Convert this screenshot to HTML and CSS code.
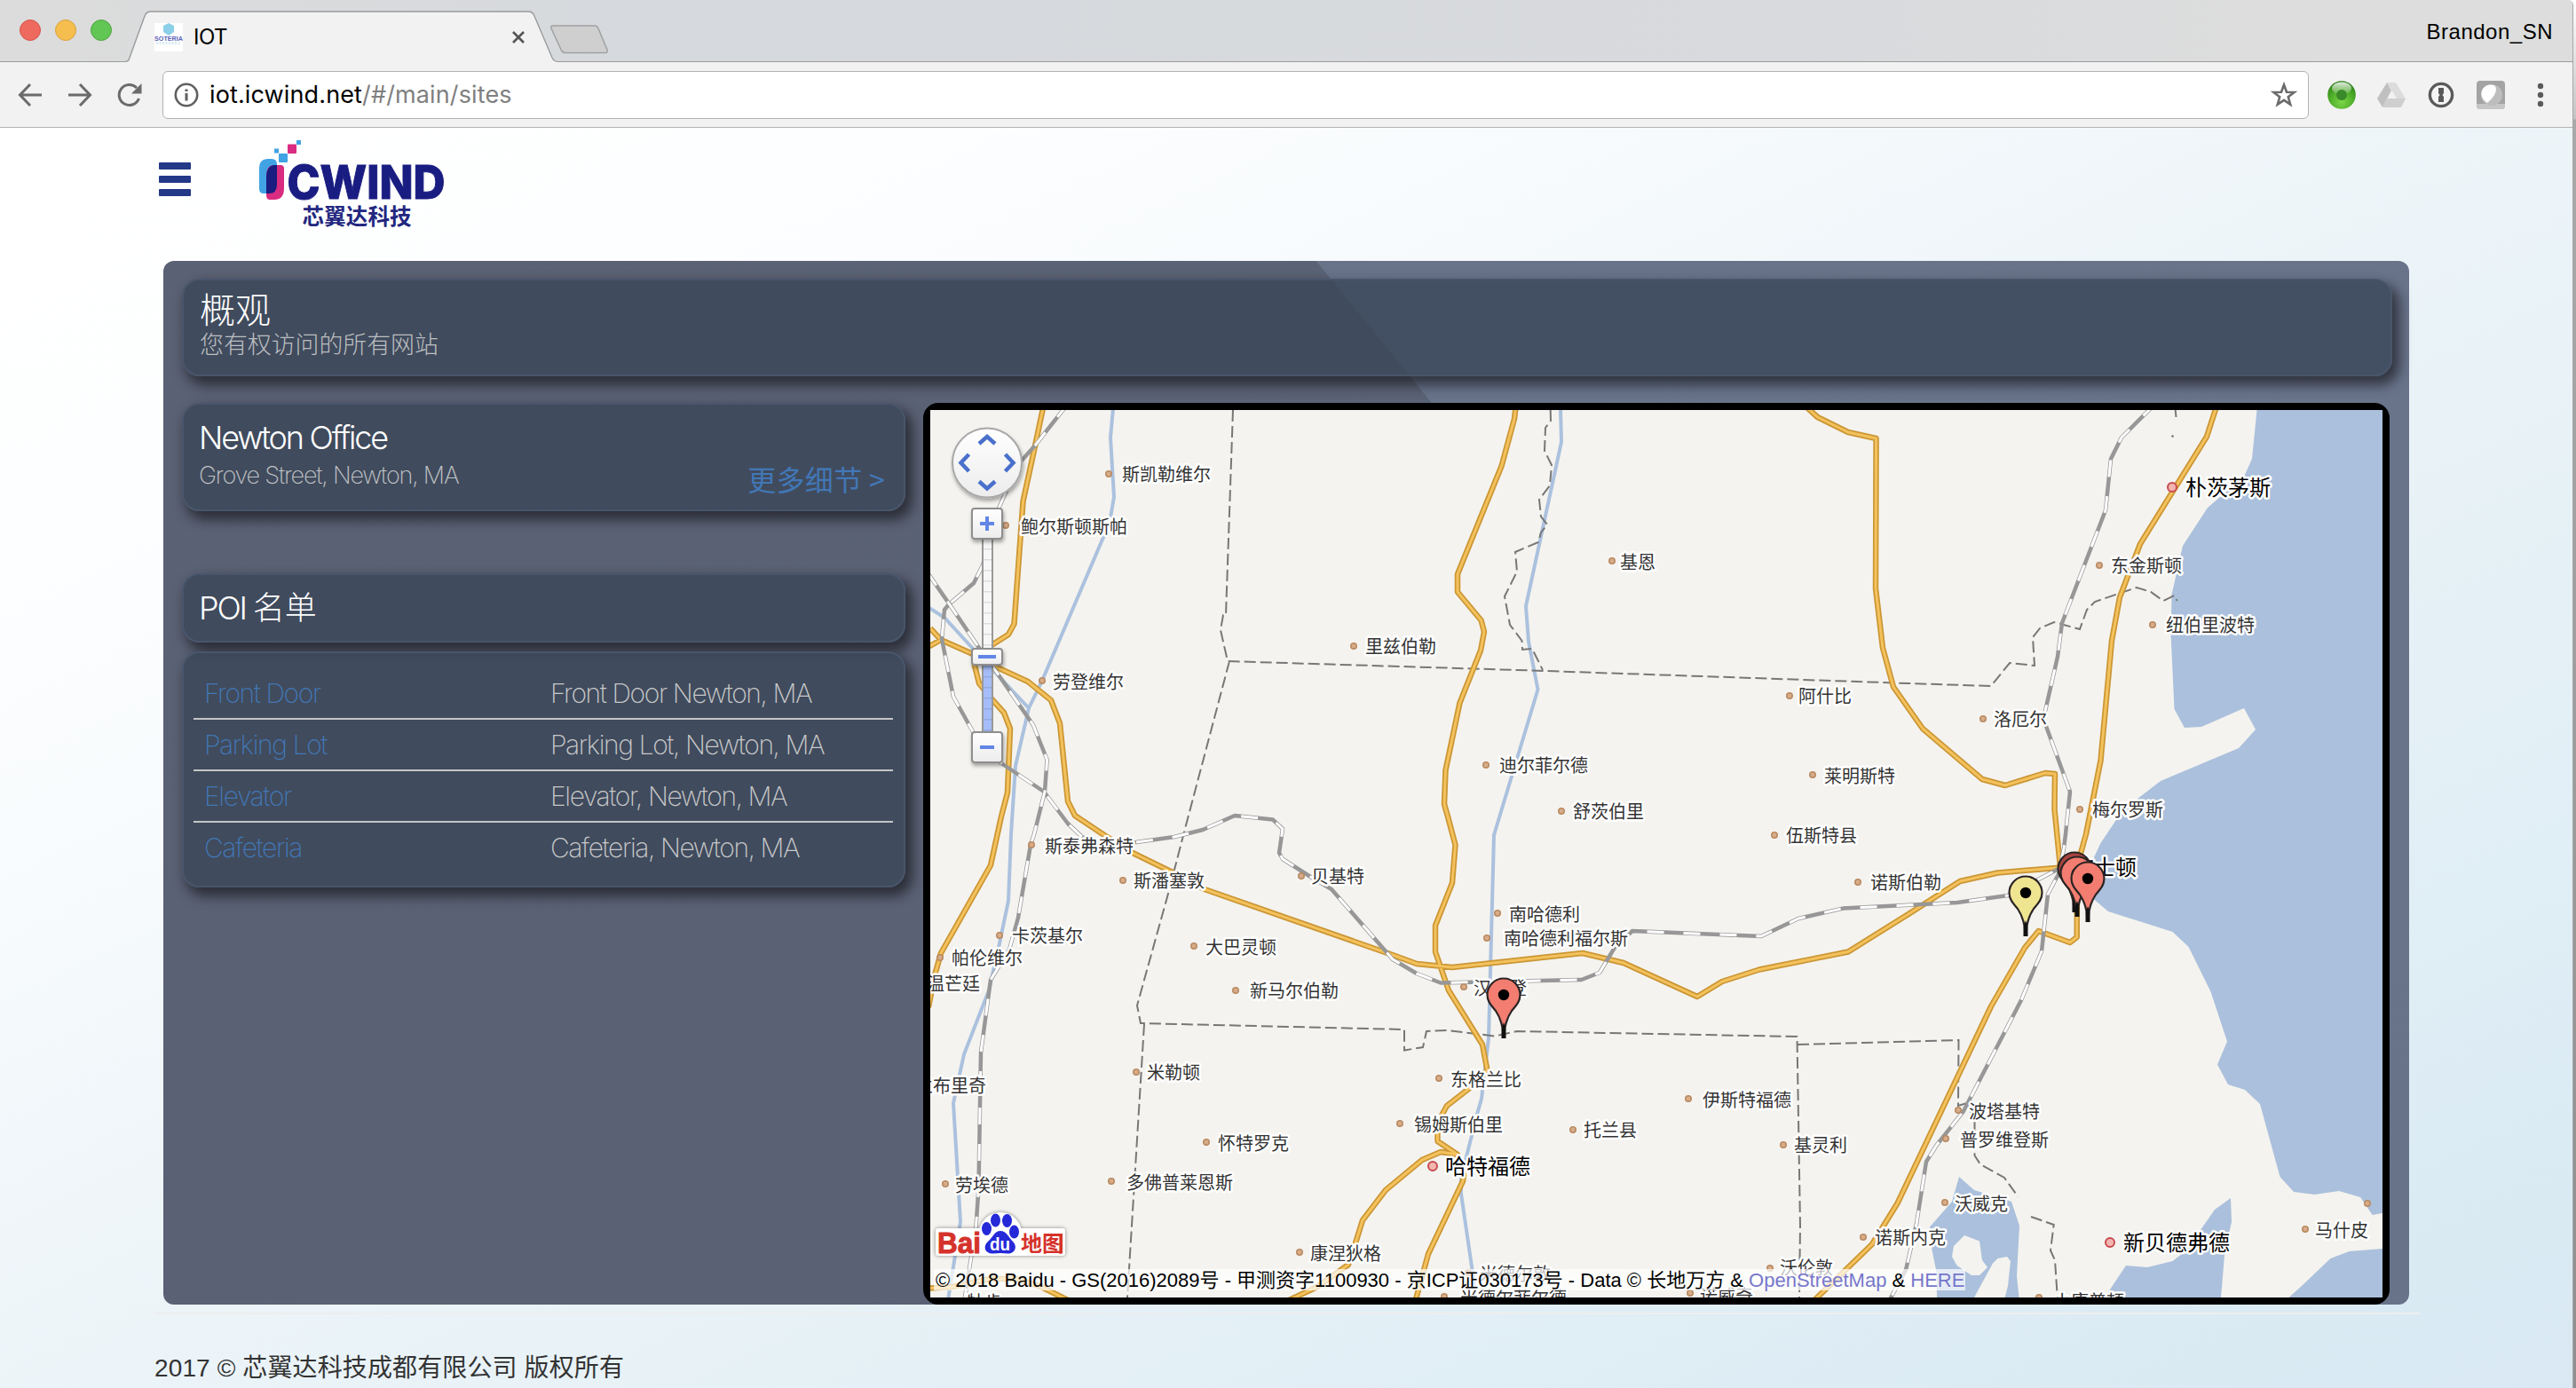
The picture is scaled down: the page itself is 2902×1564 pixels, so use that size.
FILE: index.html
```html
<!DOCTYPE html>
<html lang="zh-CN">
<head>
<meta charset="utf-8">
<title>IOT</title>
<link rel="stylesheet" href="styles.css">
</head>
<body>
<div class="window">
  <div class="tabstrip">
    <div class="lights"><i class="light red"></i><i class="light yellow"></i><i class="light green"></i></div>
    <div class="tab">
      <svg class="tab-shape" width="546" height="58" viewBox="0 0 546 58"><path d="M14 57C17 57 17 56 18 53L35 6Q37 1 42 1H467Q472 1 474 6L494 53Q496 57 499 57V58H14Z" fill="#f2f2f2"/><path d="M14 57C17 57 17 56 18 53L35 6Q37 1 42 1H467Q472 1 474 6L494 53Q496 57 499 57" fill="none" stroke="#999b9d" stroke-width="1.4"/></svg>
      <svg class="favicon" width="32" height="32" viewBox="0 0 32 32"><rect width="32" height="32" fill="#fff"/><path d="M16 0l6 3v7l-6 4-6-4V3z" fill="#8ccfe8"/><text x="0" y="20" font-size="7" font-weight="700" textLength="32" lengthAdjust="spacingAndGlyphs" fill="#5a62b5">SOTERIA</text><path d="M2 22.500H30" stroke="#d5e9f5" stroke-width="3" stroke-dasharray="2 1.500"/></svg>
      <span class="tab-title">IOT</span>
      <svg class="tab-close" width="16" height="16" viewBox="0 0 16 16"><path d="M2 2L14 14M14 2L2 14" stroke="#555" stroke-width="2.600"/></svg>
    </div>
    <svg class="newtab" width="68" height="34" viewBox="0 0 68 34"><path d="M4 1H51Q54 1 55 4L65 28Q66 31.500 63 31.500H18Q15 31.500 13.500 29L2 4Q1 1 4 1Z" fill="#cfcfcf" stroke="#a0a1a2" stroke-width="1.500"/></svg>
    <span class="profile">Brandon_SN</span>
  </div>
  <div class="toolbar">
    <svg class="tb back" width="28" height="28" viewBox="0 0 28 28"><path d="M27 14H3M14 2L2.500 14L14 26" fill="none" stroke="#6b6b6b" stroke-width="3"/></svg>
    <svg class="tb fwd" width="28" height="28" viewBox="0 0 28 28"><path d="M1 14H25M14 2L25.500 14L14 26" fill="none" stroke="#6b6b6b" stroke-width="3"/></svg>
    <svg class="tb reload" width="28" height="28" viewBox="0 0 28 28"><path d="M24.500 18A11.500 11.500 0 1 1 22 6" fill="none" stroke="#6b6b6b" stroke-width="3"/><path d="M27.500 1V12.500H16Z" fill="#6b6b6b"/></svg>
    <div class="omnibox">
      <svg width="28" height="28" viewBox="0 0 28 28"><circle cx="14" cy="14" r="12.200" fill="none" stroke="#606060" stroke-width="2.600"/><path d="M14 12V20.500M14 7.500V10" stroke="#606060" stroke-width="3"/></svg>
      <span class="url"><b>iot.icwind.net</b>/#/main/sites</span>
      <svg class="star" width="30" height="30" viewBox="0 0 30 30"><path d="M15 3.500L18 11.700L26.500 12L19.800 17.300L22.200 25.600L15 20.800L7.800 25.600L10.200 17.300L3.500 12L12 11.700Z" fill="none" stroke="#6b6b6b" stroke-width="2.600"/></svg>
    </div>
    <svg class="ext" width="32" height="32" viewBox="0 0 32 32"><defs><radialGradient id="gr" cx=".5" cy=".75" r=".75"><stop offset="0" stop-color="#7ed648"/><stop offset=".55" stop-color="#4fae2a"/><stop offset="1" stop-color="#2c7d18"/></radialGradient><linearGradient id="gl" x1="0" y1="0" x2="0" y2="1"><stop offset="0" stop-color="#fff" stop-opacity=".85"/><stop offset="1" stop-color="#fff" stop-opacity=".1"/></linearGradient></defs><circle cx="16" cy="16" r="15.800" fill="url(#gr)"/><ellipse cx="16" cy="8.500" rx="11" ry="7" fill="url(#gl)"/><circle cx="16" cy="16" r="6" fill="#3b8a29"/></svg>
    <svg class="ext" width="32" height="32" viewBox="0 0 32 32"><path d="M11 2H21L32 20H22Z" fill="#dcdcdc"/><path d="M11 2L16 11L6 30L0 20Z" fill="#c0c0c0"/><path d="M11 20H32L27 30H6Z" fill="#cfcfcf"/></svg>
    <svg class="ext" width="32" height="32" viewBox="0 0 32 32"><circle cx="16" cy="16" r="12.600" fill="#f5f5f5" stroke="#5a5a5a" stroke-width="3.400"/><path d="M13 8H19V14L17.500 16L19 18V24H13V18L14.500 16L13 14Z" fill="#5a5a5a"/></svg>
    <svg class="ext" width="32" height="32" viewBox="0 0 32 32"><rect width="32" height="32" rx="4" fill="#a3a3a3"/><path d="M0 26H32V28Q32 32 28 32H4Q0 32 0 28Z" fill="#c6c6c6"/><circle cx="17" cy="16" r="12" fill="#bdbdbd"/><path d="M12 25Q2 18 7 9Q13 2 21 6Q25 14 12 25Z" fill="#fff"/></svg>
    <svg class="more" width="8" height="28" viewBox="0 0 8 28"><g fill="#5a5a5a"><circle cx="4" cy="4" r="3.200"/><circle cx="4" cy="14" r="3.200"/><circle cx="4" cy="24" r="3.200"/></g></svg>
  </div>
  <div class="page">
    <header class="site-header">
      <div class="burger"><i></i><i></i><i></i></div>
      <svg class="logo" width="212" height="104" viewBox="292 156 212 104">
        <path d="M292 190Q292 179 302 179H306Q312 179 312 185V208Q312 218 303 218H297Q292 218 292 213Z" fill="#41a3e4"/>
        <path d="M300 199Q300 186 309 186H316Q320 186 320 190V212Q320 225 309 225H304Q300 225 300 220Z" fill="#d92b80"/>
        <path d="M300 199Q300 188 308 186H312V208Q312 218 303 218H300Z" fill="#1a1c80"/>
        <rect x="314" y="173" width="10" height="10" rx="1" fill="#41a3e4"/><rect x="324" y="162.500" width="10" height="10.500" rx="1" fill="#d92b80"/><rect x="309" y="167.500" width="5" height="5" fill="#41a3e4"/><rect x="334" y="158" width="5" height="5" fill="#41a3e4"/>
        <text class="logo-word" x="323.500" y="224" textLength="178" lengthAdjust="spacingAndGlyphs">CWIND</text>
        <text class="logo-sub" x="340.500" y="252.500" textLength="123">芯翼达科技</text>
      </svg>
    </header>
    <main class="panel">
      <section class="card overview"><h1>概观</h1><p>您有权访问的所有网站</p></section>
      <div class="columns">
        <div class="side">
          <section class="card office">
            <div><h2>Newton Office</h2><p>Grove Street, Newton, MA</p></div>
            <a class="more-link">更多细节 &gt;</a>
          </section>
          <section class="card poi-head"><h2>POI <span>名单</span></h2></section>
          <section class="card poi-list">
            <div class="row"><a>Front Door</a><span>Front Door Newton, MA</span></div>
            <div class="row"><a>Parking Lot</a><span>Parking Lot, Newton, MA</span></div>
            <div class="row"><a>Elevator</a><span>Elevator, Newton, MA</span></div>
            <div class="row"><a>Cafeteria</a><span>Cafeteria, Newton, MA</span></div>
          </section>
        </div>
        <div class="map">
          <svg class="map-art" width="1636" height="1000" viewBox="1048 462 1636 1000">
            <defs>
              <path id="roads" d="M1175 460L1164 512L1152.500 565L1148 627L1142.500 703L1136 715L1117 727L1098 740M1048 708L1060 721L1096 737L1119 750L1158 768L1184 789L1194 815L1203 903L1211 919L1244 941L1276 961L1323 984L1357 1002L1566 1075L1596 1086L1636 1090L1783 1074L1829 1085L1912 1123L1940 1106L1982 1092.500L2082 1072.500L2150 1030L2208 993L2250.500 983.500L2340 976M1040 732L1060 721M1098 740L1098 750L1103 770L1117.500 788L1131 803L1138 821L1135 893L1128 920L1116 975L1060 1074L1053 1099L1046 1135M1708 455L1706 472L1691.600 525L1642 647V667L1668.600 699L1672 712L1668 733L1644.500 792L1628.500 868L1627 906L1631 920L1639.500 952L1636 995L1617 1043V1072.500L1632 1116L1670 1177L1675.500 1206L1657 1225L1630 1246L1619 1266L1619.600 1286L1642 1301L1649 1324L1648 1331L1609 1413L1594 1468M1642 1301L1623 1298L1602 1307L1561 1341L1535 1375L1526 1404L1519 1425L1484 1450L1450 1466M1040 1452L1073 1450L1115 1441H1145L1173 1450L1205 1466M2030 454L2047.500 470L2082 487L2113.600 494L2113 663L2121 730L2133 774L2166 821L2233 878L2259 885L2304 871L2315 872L2314.500 912L2321 977M2498 455L2486 492L2411 613L2388 673L2379 722L2366.500 857L2350 940L2340 976L2339.700 1056L2332 1062L2296.500 1049L2281 1068L2243 1134L2137.500 1356L2109 1402L2042 1467"/>
              <path id="rails" d="M1203 455L1166 502L1150 520L1132 557L1125 573L1107 637L1097 657L1069 681L1064 687L1061 720L1074 785L1098 828L1125 858L1176 892L1203 928L1219 943L1244 952L1280 949L1323 943L1355 935L1391 919L1434 923.600L1445 934L1441 961L1445 968L1478 989L1500 1002L1569 1081L1596 1097L1623 1107.500L1781.500 1104L1802 1096L1820 1066L1839 1049L1984 1055L2026 1035L2076 1023.600L2205 1017L2262 1009L2319 979M1044 644L1069 680L1103 730L1119 752L1164 817L1179.600 856L1177 892L1165 940L1161 952L1147 1034L1137 1070L1116 1104L1105 1186L1102.500 1338L1099.600 1381L1089 1449L1086 1468M2428 455L2390 493L2378 517L2372 575L2323 702L2318 740L2302 810L2332 892L2327 940L2325 956L2319 985L2307 1007.500L2300 1072L2277 1127L2212 1252L2182 1290L2170 1309L2159 1379L2147 1431L2127 1468"/>
              <g id="pin"><path d="M0 0C-1.500 -12 -3 -20 -9 -29C-15 -36 -18.500 -40 -18.500 -47A18.500 18.500 0 0 1 18.500 -47C18.500 -40 15 -36 9 -29C3 -20 1.500 -12 0 0Z" stroke="#2b2424" stroke-width="2.200"/><path d="M-2.500 2V-8L0 -16L2.500 -8V2Z" fill="#111"/><circle cy="-47" r="6.200" fill="#000"/></g>
            </defs>
            <rect x="1048" y="462" width="1636" height="1000" fill="#f4f3ef"/>
            <g fill="#abc0dc">
              <path d="M2542.500 462L2537 517L2528 537L2501 560L2487 572L2459 615L2446.500 670L2445.700 717L2449.500 799L2461 820L2480 819L2528 798L2541 822L2522 843L2434 880L2405.500 902L2384.500 923L2366.500 950L2359 966L2355 1010L2375 1027L2447.600 1050L2465.600 1067L2490.500 1117.500L2509 1173.600L2498 1199.600L2510 1222L2529 1228L2546 1244L2568.500 1326L2584 1343L2607.500 1346L2635 1342L2659 1349L2672.600 1369L2684 1367V462Z"/>
              <path d="M2684 1407L2646.600 1410L2625.500 1418L2593 1449L2578.500 1462H2684Z"/>
              <path d="M2513 1350L2495 1363L2479 1386L2463 1409L2447.600 1421L2419 1428L2395 1426L2375 1456L2372 1462H2502L2506.500 1409L2514 1377Z"/>
              <path d="M2207 1326L2224 1341L2266 1354L2275 1381L2272 1438L2274.600 1462H2182L2181.700 1434L2176 1406L2174 1382.500L2199 1354Z"/>
            </g>
            <path d="M2213 1392L2230 1398.600L2233 1420L2239 1428L2230 1437H2221L2204.600 1426L2199 1416L2201 1404ZM2261 1416L2265 1421L2262 1449L2258.600 1462H2224L2245 1423.600L2250.500 1418Z" fill="#f4f3ef"/>
            <path class="river" d="M1254 460L1251 493L1255 560L1251 583L1244 603L1174 767L1159 798L1144 863L1139 940L1136 1015L1126 1063L1114 1116L1086 1188L1074 1243L1082 1377L1068 1465M1044 683L1064 696L1098 733L1159 798M1758 460L1759 498L1719 683L1722 723L1732.500 777L1683 941L1677 1170L1669 1238L1665 1252L1646 1327V1345L1659 1434L1662 1464"/>
            <path class="border" d="M1389 462L1381 693H1378L1375 710L1383 745L1741 756L2150 770L2243 773L2264 747L2292 750L2290 718L2298 708L2314 701L2343 709L2351 687L2360 678L2407 662L2423 667L2437 677L2449.500 671L2452.600 677M1385 745L1336 930L1316 1007L1281 1133L1285 1153L1582 1160V1183.500L1603 1180L1607 1162L1630 1161L1684 1167.500L1709 1162L2024.500 1168L2028 1381L2027 1462M2025 1177L2206.500 1172L2206 1246L2216 1243L2224.500 1263V1302L2231 1312L2258 1327L2273.500 1348.600M2288 1371L2313.700 1380L2310 1409L2315 1420L2317.500 1457.500M1289 1154L1279 1316L1270 1462M1746.700 462L1747 474L1741 482L1740 508L1748 524L1746 547L1734 563L1736 582L1743 591L1736 600L1733 611L1707 622L1709 644L1695 672L1701 704L1714.500 722L1715 732L1726 731L1738 755M2450.700 462L2451.500 470"/>
            <circle cx="2447.500" cy="491.500" r="1.200" fill="#666"/>
            <use href="#roads" class="road-edge"/><use href="#roads" class="road-core"/>
            <use href="#rails" class="rail-edge"/><use href="#rails" class="rail-core"/>
            <g class="dots">
              <circle cx="1249" cy="534" r="3.200"/><circle cx="1133" cy="592" r="3.200"/><circle cx="1174" cy="767" r="3.200"/><circle cx="1525" cy="728" r="3.200"/><circle cx="1816" cy="632" r="3.200"/><circle cx="2016" cy="784" r="3.200"/><circle cx="1674" cy="862" r="3.200"/><circle cx="2042" cy="873" r="3.200"/><circle cx="1759" cy="914" r="3.200"/><circle cx="1999" cy="941" r="3.200"/><circle cx="2093" cy="994" r="3.200"/><circle cx="2365" cy="637" r="3.200"/><circle cx="2425" cy="704" r="3.200"/><circle cx="2234" cy="810" r="3.200"/><circle cx="2343" cy="912" r="3.200"/><circle cx="1162" cy="952" r="3.200"/><circle cx="1265" cy="992" r="3.200"/><circle cx="1466" cy="987" r="3.200"/><circle cx="1126" cy="1054" r="3.200"/><circle cx="1059" cy="1079" r="3.200"/><circle cx="1345" cy="1066" r="3.200"/><circle cx="1392" cy="1116" r="3.200"/><circle cx="1280" cy="1208" r="3.200"/><circle cx="1359" cy="1287" r="3.200"/><circle cx="1252" cy="1331" r="3.200"/><circle cx="1065" cy="1334" r="3.200"/><circle cx="1464" cy="1411" r="3.200"/><circle cx="1687" cy="1029" r="3.200"/><circle cx="1675" cy="1057" r="3.200"/><circle cx="1649" cy="1112" r="3.200"/><circle cx="1621" cy="1215" r="3.200"/><circle cx="1577" cy="1266" r="3.200"/><circle cx="1772" cy="1273" r="3.200"/><circle cx="1902" cy="1238" r="3.200"/><circle cx="2009" cy="1290" r="3.200"/><circle cx="2099" cy="1394" r="3.200"/><circle cx="1994" cy="1429" r="3.200"/><circle cx="1654" cy="1434" r="3.200"/><circle cx="1627" cy="1461" r="3.200"/><circle cx="1904" cy="1457" r="3.200"/><circle cx="2206" cy="1251" r="3.200"/><circle cx="2192" cy="1283" r="3.200"/><circle cx="2191" cy="1355" r="3.200"/><circle cx="2597" cy="1385" r="3.200"/><circle cx="2667" cy="1356" r="3.200"/><circle cx="2297" cy="1462" r="3.200"/>
            </g>
            <g class="cities"><circle cx="2447" cy="549" r="5"/><circle cx="1614" cy="1314" r="5"/><circle cx="2377" cy="1400" r="5"/></g>
            <g class="labels">
              <text x="1264" y="541.500">斯凯勒维尔</text><text x="1150" y="600.500">鲍尔斯顿斯帕</text><text x="1186" y="775.500">劳登维尔</text><text x="1538" y="736">里兹伯勒</text><text x="1825" y="640.500">基恩</text><text x="2026" y="791.500">阿什比</text><text x="1689" y="870">迪尔菲尔德</text><text x="2055" y="881.500">莱明斯特</text><text x="1772" y="921.500">舒茨伯里</text><text x="2012" y="949">伍斯特县</text><text x="2107" y="1002">诺斯伯勒</text><text x="2378" y="645">东金斯顿</text><text x="2440" y="712">纽伯里波特</text><text x="2246" y="817.500">洛厄尔</text><text x="2357" y="920">梅尔罗斯</text><text x="1177" y="960.500">斯泰弗森特</text><text x="1277" y="999.500">斯潘塞敦</text><text x="1477" y="994.500">贝基特</text><text x="1140" y="1062">卡茨基尔</text><text x="1072" y="1087">帕伦维尔</text><text x="1044" y="1115.500">温芒廷</text><text x="1358" y="1074.500">大巴灵顿</text><text x="1408" y="1124">新马尔伯勒</text><text x="1292" y="1216">米勒顿</text><text x="1031" y="1231">兰布里奇</text><text x="1372" y="1295.500">怀特罗克</text><text x="1269" y="1340">多佛普莱恩斯</text><text x="1076" y="1342.500">劳埃德</text><text x="1476" y="1420">康涅狄格</text><text x="1700" y="1037.500">南哈德利</text><text x="1694" y="1065">南哈德利福尔斯</text><text x="1660" y="1120.500">汉普登</text><text x="1634" y="1223.500">东格兰比</text><text x="1593" y="1274.500">锡姆斯伯里</text><text x="1784" y="1281">托兰县</text><text x="1918" y="1246.500">伊斯特福德</text><text x="2021" y="1298">基灵利</text><text x="2112" y="1402">诺斯内克</text><text x="2005" y="1436">沃伦敦</text><text x="1667" y="1443">米德尔敦</text><text x="1645" y="1470">米德尔菲尔德</text><text x="1915" y="1468">诺威奇</text><text x="2218" y="1259.500">波塔基特</text><text x="2208" y="1292">普罗维登斯</text><text x="2202" y="1363.500">沃威克</text><text x="2608" y="1393.500">马什皮</text><text x="2313" y="1474">小康普顿</text><text x="1089" y="1475">牡肯</text>
              <g class="major"><text x="2462" y="558">朴茨茅斯</text><text x="1628" y="1323">哈特福德</text><text x="2392" y="1409">新贝德弗德</text><text x="2335" y="986">波士顿</text></g>
            </g>
            <use href="#pin" x="1694" y="1168" fill="#f27d70"/><use href="#pin" x="2337" y="1026" fill="#a8443f"/><use href="#pin" x="2340" y="1031" fill="#f27d70"/><use href="#pin" x="2352" y="1037" fill="#f27d70"/><use href="#pin" x="2282" y="1053" fill="#efe490"/>
          </svg>
          <svg class="nav" width="90" height="390" viewBox="1070 478 90 390">
            <defs><linearGradient id="btn" x1="0" y1="0" x2="0" y2="1"><stop offset="0" stop-color="#fff"/><stop offset="1" stop-color="#ececec"/></linearGradient><filter id="sh" x="-30%" y="-30%" width="160%" height="160%"><feDropShadow dx="1" dy="3" stdDeviation="2" flood-opacity=".35"/></filter></defs>
            <rect x="1107" y="600" width="11" height="230" fill="#f7f7f7" stroke="#999" stroke-width="2"/><rect x="1108" y="745" width="9" height="84" fill="#a5bdf8"/>
            <path d="M1112.500 618V826" stroke="#000" stroke-opacity=".1" stroke-width="9" stroke-dasharray="1.500 10.500"/>
            <g fill="url(#btn)" stroke="#8e8e8e" stroke-width="2" filter="url(#sh)"><circle cx="1112" cy="521.500" r="39" stroke="#a8a8a8"/><rect x="1095" y="573" width="34" height="34" rx="3"/><rect x="1095" y="731" width="34" height="18" rx="3"/><rect x="1095" y="825" width="34" height="34" rx="3"/></g>
            <path d="M1103 500L1112 492L1121 500M1103 542.500L1112 550.500L1121 542.500M1091.500 512L1082.500 521.500L1091.500 531M1132.500 512L1141.500 521.500L1132.500 531" fill="none" stroke="#4a70cc" stroke-width="4.500"/>
            <path d="M1104 590H1120M1112 582V598M1102 740H1122M1104 842H1120" stroke="#6186e6" stroke-width="4"/>
          </svg>
          <svg class="baidu" width="160" height="60" viewBox="1050 1360 160 60">
            <g class="halo"><path d="M1057 1387H1197V1412H1057Z"/><ellipse cx="1127" cy="1390" rx="21" ry="21"/></g>
            <text x="1056" y="1411.500" class="bai" textLength="49" lengthAdjust="spacingAndGlyphs">Bai</text>
            <g fill="#2529d8"><ellipse cx="1111.500" cy="1384.500" rx="5.500" ry="7.500"/><ellipse cx="1121.500" cy="1375" rx="5.500" ry="7.500"/><ellipse cx="1134.500" cy="1375.500" rx="5.500" ry="7.500"/><ellipse cx="1142.500" cy="1388" rx="5.500" ry="7.500"/><path d="M1127 1387C1134 1387 1136 1394 1141 1399C1147 1405 1143 1413 1135 1412.500Q1127 1411.500 1119 1412.500C1109 1413 1107 1404 1113 1399C1119 1394 1120 1387 1127 1387Z"/></g>
            <text x="1115" y="1409" class="du" textLength="23" lengthAdjust="spacingAndGlyphs">du</text>
            <rect x="1177" y="1391" width="19" height="20" fill="none" stroke="#d5322b" stroke-width="2"/>
            <text x="1150" y="1409.500" class="ditu" textLength="48">地图</text>
          </svg>
          <div class="copyright">© 2018 Baidu - GS(2016)2089号 - 甲测资字1100930 - 京ICP证030173号 - Data © 长地万方 &amp; <a>OpenStreetMap</a> &amp; <a>HERE</a></div>
        </div>
      </div>
    </main>
    <footer>2017 © 芯翼达科技成都有限公司 版权所有</footer>
  </div>
</div>
</body>
</html>
```
FILE: styles.css
```css
* { box-sizing: border-box; }
body { margin: 0; width: 2902px; height: 1564px; overflow: hidden; background: linear-gradient(#fff 0, #c4c4c4 134px, #a9a9a9 135px, #8f8f8f 100%); font-family: "Liberation Sans", "Noto Sans CJK SC", sans-serif; }
h1, h2, p { margin: 0; font-weight: 300; }
svg { display: block; flex: none; }
.window { width: 2899px; height: 1564px; display: flex; flex-direction: column; border-right: 1px solid #a5a7a9; border-top-right-radius: 6px; overflow: hidden; }

.tabstrip { height: 70px; display: flex; align-items: flex-start; background: linear-gradient(90deg, #dcdcdc 0, #d6d9dd 25%, #d8dadd 70%, #dddddd 90%); border-bottom: 1px solid #999b9d; flex: none; }
.lights { display: flex; gap: 16px; padding: 22px 0 0 22px; width: 128px; }
.light { width: 24px; height: 24px; border-radius: 50%; flex: none; }
.red { background: #ee6a5f; border: 1px solid #d5544a; }
.yellow { background: #f5be4f; border: 1px solid #d9a23d; }
.green { background: #61c654; border: 1px solid #4fa63e; }
.tab { position: relative; width: 500px; height: 70px; display: flex; align-items: center; padding: 13px 0 0 46px; }
.tab-shape { position: absolute; left: 0; top: 12px; }
.favicon, .tab-title, .tab-close { position: relative; }
.tab-title { margin-left: 12px; font: 24px "Inter", sans-serif; letter-spacing: -0.5px; color: #000; flex: 1; }
.tab-close { margin-right: 36px; }
.newtab { margin: 28px 0 0 -9px; }
.profile { margin: 22px 22px 0 auto; font-size: 24px; line-height: 28px; letter-spacing: 0.5px; color: #000; }

.toolbar { height: 74px; flex: none; display: flex; align-items: center; background: #f2f2f2; border-bottom: 1px solid #b4b4b4; padding-left: 20px; }
.tb { margin-right: 28px; }
.reload { margin-right: 23px; }
.omnibox { width: 2418px; height: 54px; display: flex; align-items: center; background: #fff; border: 1px solid #b3b3b3; border-radius: 6px; padding: 0 12px 0 12px; margin-right: 21px; }
.url { margin-left: 12px; flex: 1; font: 27px "Inter", sans-serif; letter-spacing: 0.13px; color: #808080; }
.url b { font-weight: 400; color: #000; }
.ext { margin-right: 24px; }
.more { margin-left: 12px; }

.page { flex: 1; display: flex; flex-direction: column; padding-left: 172px; background: linear-gradient(to bottom right, #fff 0, #fdfeff 18%, #f8fbfd 30%, #ecf4f8 50%, #e4f0f6 70%, #dbebf4 90%, #d9e8f2 100%); }
.site-header { height: 150px; display: flex; padding: 12px 0 0 7px; }
.burger { width: 36px; margin: 27px 77px 0 0; display: flex; flex-direction: column; gap: 7.5px; flex: none; }
.burger i { height: 7.5px; border-radius: 1px; background: #233887; }
.logo-word { font: 800 52px "Inter", sans-serif; fill: #191c80; stroke: #191c80; stroke-width: 1px; }
.logo-sub { font: 700 24.500px "Noto Sans CJK SC", sans-serif; fill: #23277f; }

.panel { width: 2530px; height: 1176px; flex: none; margin-left: 12px; padding: 20px 17px 0 21px; border-radius: 12px; background: linear-gradient(50.900deg, #5a6174 0, #5a6275 64.650%, #68738a 64.700%, #69748b 100%); }
.card { border: 2px solid #48556b; border-radius: 20px; background: rgba(58, 70, 87, .8); box-shadow: 6px 8px 14px 2px rgba(20, 20, 25, .65); color: #fff; padding: 0 18px; }
.overview { height: 110px; padding-top: 9px; margin-right: 2px; }
.overview h1 { font-size: 40px; line-height: 45px; font-family: "Noto Sans CJK SC", sans-serif; }
.overview p { font-size: 26.900px; line-height: 34px; color: #bdbfc1; font-family: "Noto Sans CJK SC", sans-serif; }
.columns { display: flex; gap: 20px; margin-top: 30px; }
.side { width: 815px; display: flex; flex-direction: column; }
.side .card { font-family: "Inter", "Noto Sans CJK SC", sans-serif; font-weight: 250; }
.side h2 { font-size: 36px; line-height: 44px; font-weight: 300; letter-spacing: -2.200px; }
.side h2 span { letter-spacing: 0; }
.office { height: 122px; display: flex; justify-content: space-between; padding: 15px 21px 0 17px; }
.office p { font-size: 27px; line-height: 42px; color: #c2c4c6; letter-spacing: -1.200px; font-weight: 250; }
.more-link { font: 32px "Noto Sans CJK SC", sans-serif; line-height: 46px; margin-top: 45px; letter-spacing: .3px; color: #4277b6; }
.poi-head { height: 78px; margin-top: 70px; padding: 15px 17px 0; }
.poi-list { height: 266px; margin-top: 10px; padding: 17px 12px 0 11px; }
.row { height: 58px; display: flex; padding: 4px 0 0 12px; font-size: 30px; line-height: 48px; letter-spacing: -1.400px; color: #c8c9ca; border-bottom: 2px solid #c4c5c6; }
.row:last-child { border: 0; }
.row a { width: 390px; color: #4277b6; }

.map { position: relative; width: 1652px; height: 1016px; border: 8px solid #000; border-radius: 17px; background: #000; flex: none; }
.map-art { overflow: hidden; }
.river { fill: none; stroke: #abc1de; stroke-width: 4; }
.border { fill: none; stroke: #777; stroke-width: 2; stroke-dasharray: 13 5; }
.road-edge, .road-core, .rail-edge, .rail-core { fill: none; stroke-linejoin: round; }
.road-edge { stroke: #cb9635; stroke-width: 6.500; }
.road-core { stroke: #f4c25c; stroke-width: 3; }
.rail-edge { stroke: #979797; stroke-width: 4.500; }
.rail-core { stroke: #fff; stroke-width: 3; stroke-dasharray: 19 22; }
.dots { fill: #d8ac88; stroke: #b98a62; stroke-width: 1.600; }
.cities { fill: #f3b5b0; stroke: #c84a50; stroke-width: 2; }
.labels { font: 20px "Noto Sans CJK SC", sans-serif; fill: #333; stroke: #fff; stroke-width: 5px; stroke-linejoin: round; paint-order: stroke; }
.major { font-size: 24px; font-weight: 400; fill: #000; }
.nav { position: absolute; left: 22px; top: 16px; width: 90px; height: 390px; }
.baidu { position: absolute; left: 2px; top: 898px; }
.halo { fill: #fff; stroke: #fff; stroke-width: 6; stroke-linejoin: round; filter: drop-shadow(0 0 2px rgba(0, 0, 0, .45)); }
.bai { font: 700 34px "Liberation Sans", sans-serif; fill: #d5322b; stroke: #d5322b; stroke-width: 1px; }
.du { font: 700 20px "Liberation Sans", sans-serif; fill: #fff; }
.ditu { font: 700 24px "Noto Sans CJK SC", sans-serif; fill: #d5322b; }
.copyright { position: absolute; left: 4px; top: 968px; width: 1162px; height: 24px; padding-left: 2px; background: rgba(255, 255, 255, .7); font-size: 22px; line-height: 25px; white-space: nowrap; color: #000; }
.copyright a { color: #7777cc; }
footer { margin: 9px 172px 0 2px; padding-top: 39px; border-top: 2px solid #eeeeef; font-size: 28px; line-height: 44px; letter-spacing: .12px; color: #333; }
```
